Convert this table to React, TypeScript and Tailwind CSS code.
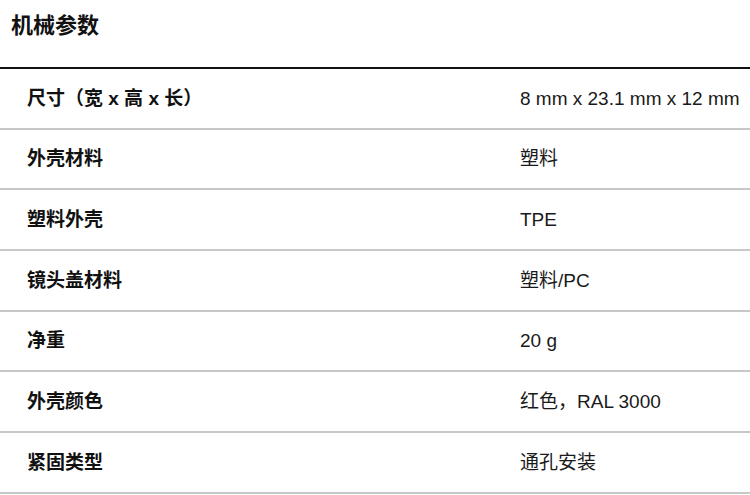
import React from "react";

const rows: [string, string][] = [
  ["尺寸（宽 x 高 x 长）", "8 mm x 23.1 mm x 12 mm"],
  ["外壳材料", "塑料"],
  ["塑料外壳", "TPE"],
  ["镜头盖材料", "塑料/PC"],
  ["净重", "20 g"],
  ["外壳颜色", "红色，RAL 3000"],
  ["紧固类型", "通孔安装"],
];

export default function App() {
  return (
    <div
      className="w-[750px] h-[495px] bg-white overflow-hidden"
      style={{ fontFamily: '"Liberation Sans", "Noto Sans CJK SC", sans-serif' }}
    >
      <div className="h-[69px] border-b-2 border-[#111111]">
        <h2 className="pl-[11px] pt-[11px] text-[22px] leading-[30px] font-bold text-[#111111]">机械参数</h2>
      </div>
      {rows.map(([k, v]) => (
        <div
          key={k}
          className="grid grid-cols-[520px_1fr] items-center h-[60.67px] border-b-2 border-[#c8c8c8]"
        >
          <div className="pl-[27px] pt-px text-[19px] font-bold text-[#111111] whitespace-nowrap">{k}</div>
          <div className="pt-px text-[19px] text-[#1a1a1a] whitespace-nowrap">{v}</div>
        </div>
      ))}
    </div>
  );
}
